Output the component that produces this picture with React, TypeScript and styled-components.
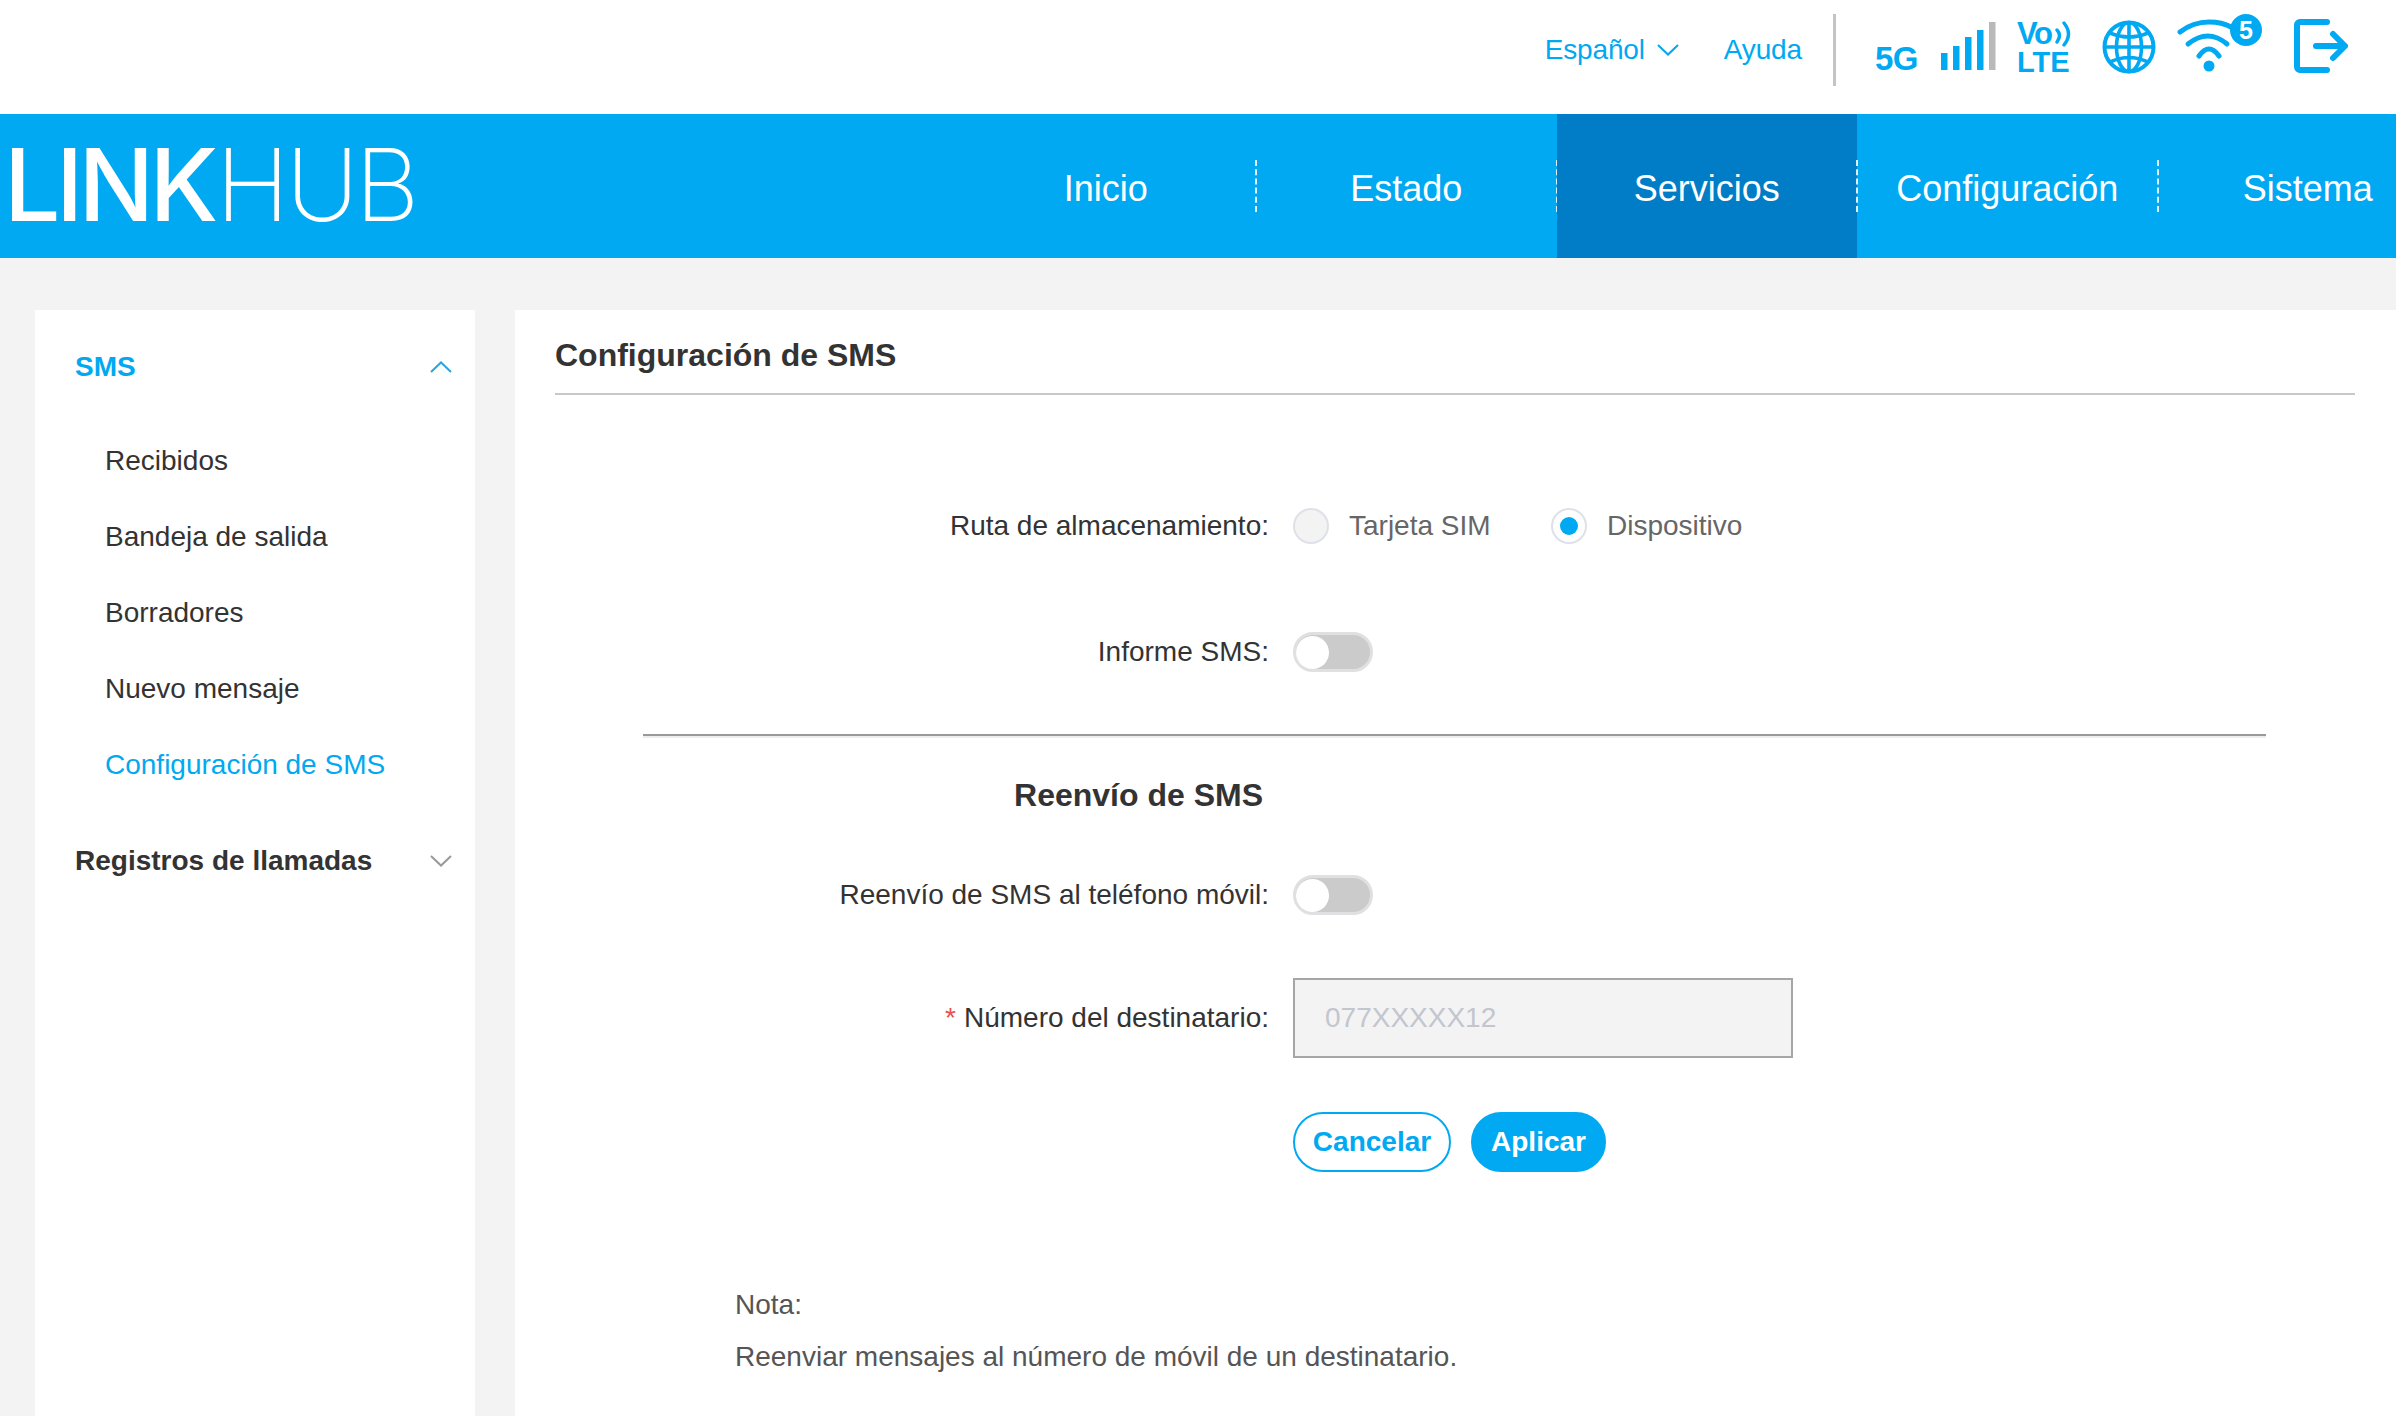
import React from "react";
import styled, { createGlobalStyle } from "styled-components";

const BLUE = "#00a9f1";
const Global = createGlobalStyle`
  html, body { margin: 0; padding: 0; background: #f3f3f3; }
  body { font-family: "Liberation Sans", Arial, sans-serif; color: #333; overflow: hidden; }
`;
const Page = styled.div`width: 2396px; height: 1416px; overflow: hidden; display: flex; flex-direction: column;`;
const TopBar = styled.header`
  height: 114px; background: #fff; display: flex; align-items: center; justify-content: flex-end;
  padding-right: 48px; flex: none; box-sizing: border-box;
`;
const TopLink = styled.a`
  font-size: 28px; letter-spacing: -0.15px; color: ${BLUE}; display: flex; align-items: center; gap: 12px; margin-right: ${p => p.$mr}px;
  position: relative; top: -7px;
`;
const VDivider = styled.div`width: 3px; height: 72px; background: #c4c4c4; margin-right: 39px; position: relative; top: -7px;`;
const Five = styled.span`font-size: 33px; font-weight: 700; color: ${BLUE}; margin-right: 23px; position: relative; top: 2px; letter-spacing: -0.5px;`;
const IconSlot = styled.div`
  display: flex; flex: none; margin-right: ${p => p.$mr}px; position: relative; top: ${p => p.$top}px;
`;
const Volte = styled.div`
  width: 56px; height: 52px; position: relative; color: ${BLUE}; font-weight: 700; margin-right: 29px; top: -9px; flex: none;
`;
const VoText = styled.span`position: absolute; left: 0; top: -1px; font-size: 31px; line-height: 26px; letter-spacing: -1.5px;`;
const LteText = styled.span`position: absolute; left: 0; top: 29px; font-size: 29px; line-height: 22px; letter-spacing: 0;`;
const VoArcs = styled.svg`position: absolute; left: 38px; top: -2px;`;
const WifiBox = styled.div`width: 85px; height: 58px; position: relative; margin-right: 32px; top: -14px; flex: none;`;
const WifiBadge = styled.span`
  position: absolute; right: 0; top: 0; width: 32px; height: 32px; border-radius: 50%; background: ${BLUE}; color: #fff;
  font-size: 25px; font-weight: 700; display: flex; align-items: center; justify-content: center;
`;
const NavBar = styled.nav`height: 144px; background: ${BLUE}; display: flex; flex: none; position: relative; overflow: hidden;`;
const Logo = styled.div`
  width: 955.5px; flex: none; box-sizing: border-box; padding: 0 0 0 4px; color: #fff; font-family: Inter, sans-serif; font-size: 100px; line-height: 144px; white-space: nowrap; letter-spacing: -4.6px;
  position: relative; top: -1px;
`;
const LogoStrong = styled.span`font-weight: 450;`;
const LogoThin = styled.span`font-weight: 200; letter-spacing: -3.6px; margin-left: 2px;`;
const NavItem = styled.div`
  width: 300.5px; flex: none; box-sizing: border-box; padding-top: 6px; display: flex; align-items: center; justify-content: center; font-size: 36px; color: #fff; position: relative;
  background: ${p => (p.$active ? "#007dc6" : "transparent")};
  &::after { content: ${p => (p.$sep ? '""' : "none")}; position: absolute; right: -1px; top: 46px; height: 52px; border-right: 2px dashed rgba(255,255,255,.85); }
`;
const Body = styled.div`flex: 1; display: flex; gap: 40px; padding: 52px 0 0 35px; min-height: 0;`;
const Sidebar = styled.aside`width: 440px; background: #fff; flex: none; box-sizing: border-box; padding-top: 28px;`;
const GroupHead = styled.div`
  display: flex; justify-content: space-between; align-items: center; height: 56px; box-sizing: border-box; padding: 2px 23px 0 40px; font-size: 28px; font-weight: 700;
  color: ${p => (p.$on ? BLUE : "#333")}; margin-top: ${p => p.$mt || 0}px;
`;
const MenuList = styled.div`display: flex; flex-direction: column; padding: 29px 0 0 70px;`;
const MenuItem = styled.div`height: 76px; display: flex; align-items: center; font-size: 28px; color: ${p => (p.$on ? BLUE : "#333")};`;
const Main = styled.main`flex: 1; background: #fff; padding: 0 41px 0 40px; min-width: 0;`;
const Title = styled.h1`
  margin: 0; height: 85px; box-sizing: border-box; padding-top: 26px; font-size: 32px; line-height: 38px; font-weight: 700; color: #333; border-bottom: 2px solid #c8c8c8;
`;
const Form = styled.div`padding-top: 101px; display: flex; flex-direction: column;`;
const Row = styled.div`
  display: flex; align-items: center; height: ${p => p.$h}px; margin-bottom: ${p => p.$mb || 0}px; margin-top: ${p => p.$mt || 0}px;
`;
const Label = styled.label`width: 714px; text-align: right; font-size: 28px; margin-right: 24px; flex: none; color: #333;`;
const Req = styled.span`color: #e8504f; margin-right: 8px;`;
const RadioOption = styled.div`display: flex; align-items: center; gap: 20px; font-size: 28px; color: #666; width: ${p => p.$w}px;`;
const RadioDot = styled.span`
  width: 36px; height: 36px; box-sizing: border-box; border-radius: 50%; border: 2px solid #dfe1e8; display: flex; align-items: center; justify-content: center;
  background: ${p => (p.$on ? "#fff" : "#f3f3f3")};
  &::after { content: ${p => (p.$on ? '""' : "none")}; width: 18px; height: 18px; border-radius: 50%; background: ${BLUE}; }
`;
const Toggle = styled.span`
  width: 80px; height: 40px; box-sizing: border-box; border-radius: 20px; background: #cbcbcb; border: 3px solid #e0e0e3; display: flex; align-items: center;
  &::before { content: ""; width: 33px; height: 33px; border-radius: 50%; background: #fff; }
`;
const Rule = styled.hr`margin: 0 0 0 88px; width: 1623px; height: 2px; border: 0; background: #999; box-shadow: 0 2px 0 #eee;`;
const SubHead = styled.h2`
  margin: 0; width: 708px; text-align: right; font-size: 32px; line-height: 38px; font-weight: 700; color: #333;
`;
const FakeInput = styled.div`
  width: 500px; height: 80px; box-sizing: border-box; border: 2px solid #a6a6a6; background: #f3f3f3; padding-left: 30px; display: flex; align-items: center; font-size: 28px; color: #c2c6ce;
`;
const Pill = styled.button`
  height: 60px; width: ${p => p.$w}px; border-radius: 30px; box-sizing: border-box; font: 700 28px "Liberation Sans", Arial, sans-serif; padding: 0; margin: 0 20px 0 0;
  border: 2px solid ${BLUE}; background: ${p => (p.$primary ? BLUE : "#fff")}; color: ${p => (p.$primary ? "#fff" : BLUE)};
`;
const Note = styled.div`padding: 107px 0 0 180px; font-size: 28px; line-height: 52px; color: #555;`;
const Actions = styled.div`padding-left: 738px;`;

const Chevron = ({ up, color }: { up?: boolean; color: string }) => (
  <svg width="22" height="12" viewBox="0 0 22 12" fill="none" stroke={color} strokeWidth="2">
    <path d={up ? "M1 11 11 1.5 21 11" : "M1 1 11 10.5 21 1"} />
  </svg>
);

export default function App() {
  return (
    <Page>
      <Global />
      <TopBar>
        <TopLink $mr={45}>Español <Chevron color={BLUE} /></TopLink>
        <TopLink $mr={31}>Ayuda</TopLink>
        <VDivider />
        <Five>5G</Five>
        <IconSlot $mr={21} $top={-11}>
          <svg width="55" height="48" viewBox="0 0 55 48">
            <rect x="0" y="31" width="6.5" height="17" fill={BLUE} />
            <rect x="12" y="24" width="6.5" height="24" fill={BLUE} />
            <rect x="24" y="15" width="6.5" height="33" fill={BLUE} />
            <rect x="36" y="8" width="6.5" height="40" fill={BLUE} />
            <rect x="48" y="0" width="6.5" height="48" fill="#b9b9b9" />
          </svg>
        </IconSlot>
        <Volte>
          <VoText>Vo</VoText>
          <VoArcs width="18" height="28" viewBox="0 0 18 28" fill="none" stroke={BLUE} strokeWidth="3.4" strokeLinecap="round">
            <path d="M2 10Q7 15 2 22M9 3Q18 14 9 25" />
          </VoArcs>
          <LteText>LTE</LteText>
        </Volte>
        <IconSlot $mr={21} $top={-10}>
          <svg width="54" height="54" viewBox="0 0 54 54" fill="none" stroke={BLUE} strokeWidth="3.6">
            <circle cx="27" cy="27" r="24.5" strokeWidth="4" />
            <ellipse cx="27" cy="27" rx="12.5" ry="24.5" />
            <path d="M27 2.5v49M8 13Q27 21 46 13M2.5 27h49M8 42Q27 33 46 42" />
          </svg>
        </IconSlot>
        <WifiBox>
          <svg width="60" height="58" viewBox="0 0 60 58" fill="none" stroke={BLUE} strokeWidth="5" strokeLinecap="round">
            <path d="M3 18C12 11 23 8 32 8 39 8 47 9 54 13" />
            <path d="M11 30Q31 14 50 30" />
            <path d="M22 42Q32 28 42 42" />
            <circle cx="32" cy="52" r="5.5" fill={BLUE} stroke="none" />
          </svg>
          <WifiBadge>5</WifiBadge>
        </WifiBox>
        <IconSlot $mr={0} $top={-11}>
          <svg width="54" height="54" viewBox="0 0 54 54" fill="none" stroke={BLUE} strokeWidth="6" strokeLinecap="round" strokeLinejoin="round">
            <path d="M33 3H6a3 3 0 0 0-3 3v42a3 3 0 0 0 3 3h27" />
            <path d="M22 27h28M39 15l12 12-12 12" />
          </svg>
        </IconSlot>
      </TopBar>
      <NavBar>
        <Logo><LogoStrong>LINK</LogoStrong><LogoThin>HUB</LogoThin></Logo>
        <NavItem $sep>Inicio</NavItem>
        <NavItem $sep>Estado</NavItem>
        <NavItem $sep $active>Servicios</NavItem>
        <NavItem $sep>Configuración</NavItem>
        <NavItem>Sistema</NavItem>
      </NavBar>
      <Body>
        <Sidebar>
          <GroupHead $on>SMS <Chevron up color="#2aa5e0" /></GroupHead>
          <MenuList>
            <MenuItem>Recibidos</MenuItem>
            <MenuItem>Bandeja de salida</MenuItem>
            <MenuItem>Borradores</MenuItem>
            <MenuItem>Nuevo mensaje</MenuItem>
            <MenuItem $on>Configuración de SMS</MenuItem>
          </MenuList>
          <GroupHead $mt={29}>Registros de llamadas <Chevron color="#999" /></GroupHead>
        </Sidebar>
        <Main>
          <Title>Configuración de SMS</Title>
          <Form>
            <Row $h={60} $mb={66}>
              <Label>Ruta de almacenamiento:</Label>
              <RadioOption $w={258}><RadioDot />Tarjeta SIM</RadioOption>
              <RadioOption $w={300}><RadioDot $on />Dispositivo</RadioOption>
            </Row>
            <Row $h={60} $mb={52}>
              <Label>Informe SMS:</Label>
              <Toggle />
            </Row>
            <Rule />
            <Row $h={60} $mb={40} $mt={29}><SubHead>Reenvío de SMS</SubHead></Row>
            <Row $h={60} $mb={53}>
              <Label>Reenvío de SMS al teléfono móvil:</Label>
              <Toggle />
            </Row>
            <Row $h={80} $mb={54}>
              <Label><Req>*</Req>Número del destinatario:</Label>
              <FakeInput>077XXXXX12</FakeInput>
            </Row>
            <Actions>
              <Pill $w={158}>Cancelar</Pill>
              <Pill $w={135} $primary>Aplicar</Pill>
            </Actions>
            <Note>
              <div>Nota:</div>
              <div>Reenviar mensajes al número de móvil de un destinatario.</div>
            </Note>
          </Form>
        </Main>
      </Body>
    </Page>
  );
}
